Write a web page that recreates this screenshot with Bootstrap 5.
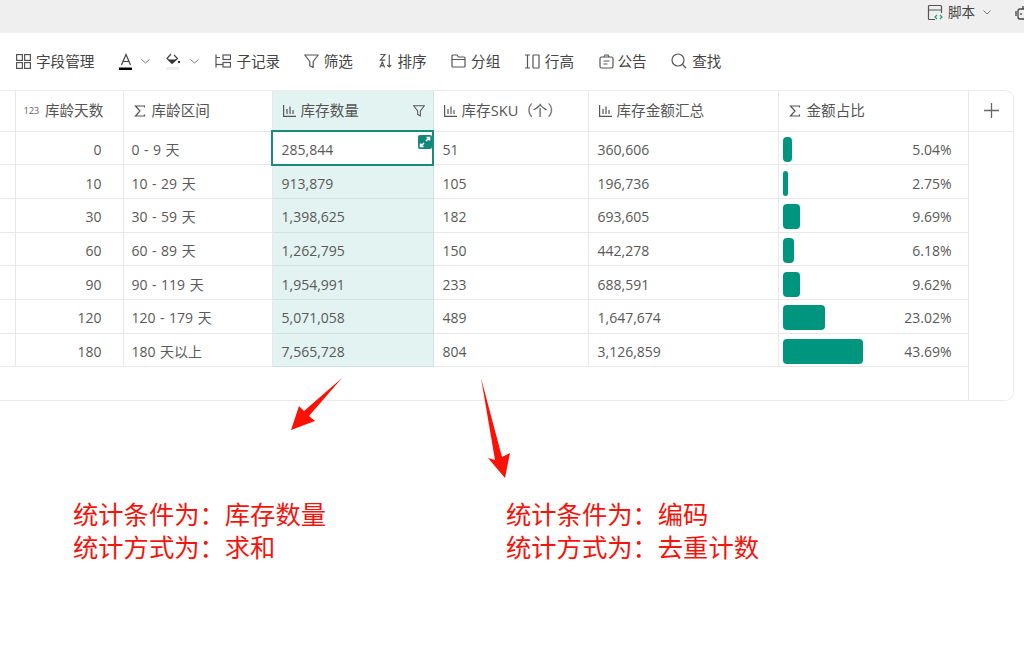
<!DOCTYPE html>
<html lang="zh-CN">
<head>
  <meta charset="UTF-8" />
  <meta name="viewport" content="width=device-width, initial-scale=1.0">
  <title>库龄统计</title>
  <link href="https://cdn.jsdelivr.net/npm/bootstrap@5.3.3/dist/css/bootstrap.min.css" rel="stylesheet" />
  <style>
    html, body { height: 100%; overflow: hidden; }
    body {
      position: relative;
      background: #fff;
      color: #555;
      font-family: "Open Sans", "Noto Sans CJK SC", sans-serif;
      font-size: 14px;
    }
    svg { display: block; flex: none; }
    .ic { fill: none; stroke: #555; stroke-width: 1.2; }
    .top-strip { height: 33px; padding-bottom: 8px; background: #efefef; font-size: 13.5px; color: #444; }
    .tool-strip { height: 57px; padding-left: 16px; gap: 24.5px; font-size: 14.6px; color: #444; }
    .tool-item { display: flex; align-items: center; gap: 5px; }
    .tool-tight { gap: 4px; }
    .tool-sub { margin-left: -8.5px; }
    .tool-back { margin-left: -1px; }
    .tool-back2 { margin-left: -2px; }
    .tool-fwd { margin-left: 2px; }
    .sheet-wrap {
      width: 1014px;
      height: 311px;
      border: 1px solid #ebebeb;
      border-left: 0;
      border-top-right-radius: 9px;
      border-bottom-right-radius: 9px;
      overflow: hidden;
    }
    .sheet { table-layout: fixed; width: 1013px; margin: 0; border-collapse: collapse; color: #595959; }
    .sheet > :not(caption) > * > * {
      padding: 3px 8px 0 9px;
      height: 33.7px;
      border: 0;
      border-bottom: 1px solid #e8e8e8;
      border-right: 1px solid #e8e8e8;
      box-shadow: none;
      background: transparent;
      color: #595959;
      vertical-align: middle;
    }
    .sheet > thead > tr > th { height: 40px; padding: 0 8px 0 10px; font-weight: 400; font-size: 14.6px; color: #555; }
    .sheet > thead > tr > th.age-head { padding-left: 8px; }
    .sheet > :not(caption) > * > .age-cell { padding-right: 21px; }
    .sheet > :not(caption) > * > .range-cell { padding-left: 8px; word-spacing: .9px; }
    .sheet > :not(caption) > * > .col-pick { background: #e3f3f1; border-bottom-color: #cfe2df; border-right-color: #cfe2df; border-left: 1px solid #cfe2df; }
    .sheet > :not(caption) > * > .cell-on {
      position: relative;
      background: #fff;
      outline: 2px solid #1b8b79;
      outline-offset: -1px;
    }
    .sheet > :not(caption) > * > .add-col { border-right: 0; border-bottom: 0; border-left: 1px solid #e8e8e8; }
    .sheet > thead > tr > th.add-head { border-right: 0; text-align: center; padding: 0 0 0 2px; }
    .sheet > tbody > tr > .foot-cell { height: 33px; border-right: 0; border-bottom: 0; }
    .head-in { display: flex; align-items: center; gap: 6px; white-space: nowrap; }
    .head-chart { gap: 5px; }
    .tag-123 { font-size: 9.5px; color: #666; letter-spacing: -.3px; }
    .grow-expand { position: absolute; top: 3px; right: 1px; width: 14px; height: 14px; background: #11897a; border-radius: 2px; }
    .pct-in { display: flex; align-items: center; justify-content: space-between; margin-left: -5px; margin-right: 8px; }
    .pct-bar { display: block; height: 25px; background: #00957f; border-radius: 4px; }
    .note-row { margin-top: 96px; padding-left: 73px; color: #f5140c; font-size: 25.3px; line-height: 33px; font-family: "Noto Sans CJK SC", sans-serif; }
    .note-one { width: 433px; }
    .arrows { position: absolute; left: 0; top: 0; pointer-events: none; }
  </style>
</head>
<body>
  <div class="top-strip d-flex justify-content-end align-items-center">
    <div class="d-flex align-items-center">
      <svg width="17" height="17" viewBox="0 0 17 17" class="ic"><path d="M8 15.500H2.500a1 1 0 0 1-1-1V2.500a1 1 0 0 1 1-1h11a1 1 0 0 1 1 1V9M1.500 6h13"/><path d="M10 11l-2 2 2 2M13 11l2 2-2 2" stroke="#2a9d6f"/></svg>
      <span class="ms-1">脚本</span>
      <svg class="ms-2" width="8" height="5" viewBox="0 0 8 5" fill="none" stroke="#777"><path d="M.5.500 4 4 7.500.5"/></svg>
      <svg class="ms-4" width="16" height="16" viewBox="0 0 16 16" style="margin-right:-7px" fill="none" stroke="#444" stroke-width="1.3"><path d="M1 6v5M8 1v3"/><rect x="3" y="4" width="12" height="10" rx="2"/><path d="M6 8v2M11 8v2"/></svg>
    </div>
  </div>

  <div class="tool-strip d-flex align-items-center">
    <div class="tool-item">
      <svg width="15" height="15" viewBox="0 0 15 15" class="ic"><rect x=".6" y=".6" width="5.800" height="5.800"/><rect x="8.600" y=".6" width="5.800" height="5.800"/><rect x=".6" y="8.600" width="5.800" height="5.800"/><rect x="8.600" y="8.600" width="5.800" height="5.800"/></svg>
      <span>字段管理</span>
    </div>
    <div class="d-flex align-items-center">
      <svg width="14" height="18" viewBox="0 0 14 18"><path d="M2.500 12 7 1.500 11.500 12M4 8.500h6" fill="none" stroke="#444" stroke-width="1.200"/><rect x="0" y="14.500" width="13" height="2.500" fill="#000"/></svg>
      <svg style="margin-left:8.500px" width="9" height="5" viewBox="0 0 9 5" fill="none" stroke="#777"><path d="M.5.500 4.500 4 8.500.5"/></svg>
      <svg style="margin-left:16px" width="15" height="18" viewBox="0 0 15 18"><path d="M5 1 1 5.500 6 10.500 11.500 5.500 8 2" fill="none" stroke="#444" stroke-width="1.200"/><path d="M2 6.500h9L6 10.500z" fill="#333"/><circle cx="13" cy="9" r="1.200" fill="#333"/><rect x="0" y="14" width="13" height="3" fill="#eee"/></svg>
      <svg style="margin-left:9px" width="9" height="5" viewBox="0 0 9 5" fill="none" stroke="#777"><path d="M.5.500 4.500 4 8.500.5"/></svg>
    </div>
    <div class="tool-item tool-sub">
      <svg width="16" height="14" viewBox="0 0 16 14" class="ic"><path d="M1 .5v13M1 3.500h4"/><rect x="8" y="1" width="7.500" height="4.500"/><rect x="8" y="8.500" width="7.500" height="4.500"/><path d="M1 10.500h7"/></svg>
      <span>子记录</span>
    </div>
    <div class="tool-item tool-back">
      <svg width="15" height="15" viewBox="0 0 15 15" class="ic"><path d="M.8 1h13.400L9.200 7.500v6l-3.400-1.800V7.500z" stroke-linejoin="round"/></svg>
      <span>筛选</span>
    </div>
    <div class="tool-item tool-tight tool-fwd">
      <svg width="14" height="16" viewBox="0 0 15 16" class="ic"><path d="M1.500 1h5L1.500 7h5M1 15l2.500-6L6 15M1.800 13h3.400M11 1v13.500M8.800 12.300l2.200 2.200 2.200-2.200"/></svg>
      <span>排序</span>
    </div>
    <div class="tool-item">
      <svg width="15" height="14" viewBox="0 0 15 14" class="ic"><path d="M1 12V2a1 1 0 0 1 1-1h4l1.500 2H13a1 1 0 0 1 1 1v8a1 1 0 0 1-1 1H2a1 1 0 0 1-1-1zM1 5.500h13"/></svg>
      <span>分组</span>
    </div>
    <div class="tool-item tool-back">
      <svg width="16" height="15" viewBox="0 0 16 15" class="ic"><path d="M1 1h5M1 14h5M3.500 1v13"/><rect x="9" y="1" width="6" height="13" rx=".5"/></svg>
      <span>行高</span>
    </div>
    <div class="tool-item tool-tight">
      <svg width="15" height="15" viewBox="0 0 15 15" class="ic"><rect x="1" y="3" width="13" height="11" rx="1.500"/><path d="M5 3 6 1h3l1 2M4.500 7h6M4.500 10h4"/></svg>
      <span>公告</span>
    </div>
    <div class="tool-item">
      <svg width="16" height="16" viewBox="0 0 16 16" class="ic"><circle cx="7" cy="7" r="6"/><path d="M11.500 11.500 15 15"/></svg>
      <span>查找</span>
    </div>
  </div>

  <div class="sheet-wrap">
    <table class="table sheet">
      <colgroup>
        <col style="width:15px"><col style="width:108px"><col style="width:149px"><col style="width:161px"><col style="width:155px"><col style="width:190px"><col style="width:190px"><col style="width:45px">
      </colgroup>
      <thead>
        <tr>
          <th></th>
          <th class="age-head"><div class="head-in"><span class="tag-123">123</span>库龄天数</div></th>
          <th><div class="head-in"><svg width="12" height="12" viewBox="0 0 12 12" class="ic"><path d="M10.500 2.500V1h-9L6 6l-4.500 5h9V9.500"/></svg>库龄区间</div></th>
          <th class="col-pick"><div class="head-in head-chart"><svg width="13" height="12" viewBox="0 0 13 12" class="ic"><path d="M.6 0v11.400H13M4 4v5M7 1.500V9M10 5v4"/></svg>库存数量<svg class="ms-auto" width="12" height="12" viewBox="0 0 15 15"><path d="M.8 1h13.400L9.200 7.500v6l-3.400-1.800V7.500z" fill="none" stroke="#555" stroke-width="1.300"/></svg></div></th>
          <th><div class="head-in head-chart"><svg width="13" height="12" viewBox="0 0 13 12" class="ic"><path d="M.6 0v11.400H13M4 4v5M7 1.500V9M10 5v4"/></svg>库存SKU（个）</div></th>
          <th><div class="head-in head-chart"><svg width="13" height="12" viewBox="0 0 13 12" class="ic"><path d="M.6 0v11.400H13M4 4v5M7 1.500V9M10 5v4"/></svg>库存金额汇总</div></th>
          <th><div class="head-in"><svg width="12" height="12" viewBox="0 0 12 12" class="ic"><path d="M10.500 2.500V1h-9L6 6l-4.500 5h9V9.500"/></svg>金额占比</div></th>
          <th class="add-head"><svg class="mx-auto" width="15" height="15" viewBox="0 0 15 15" fill="none" stroke="#666" stroke-width="1.300"><path d="M7.500 0v15M0 7.500h15"/></svg></th>
        </tr>
      </thead>
      <tbody>
        <tr>
          <td></td><td class="text-end age-cell">0</td><td class="range-cell">0 - 9 天</td>
          <td class="col-pick cell-on">285,844<span class="grow-expand"><svg width="14" height="14" viewBox="0 0 14 14" fill="none" stroke="#fff" stroke-width="1.600"><path d="M8 6l3.500-3.500M8.500 2.500h3v3M6 8l-3.500 3.500M5.500 11.500h-3v-3"/></svg></span></td>
          <td>51</td><td>360,606</td>
          <td><div class="pct-in"><span class="pct-bar" style="width:9px"></span>5.04%</div></td>
          <td class="add-col" rowspan="8"></td>
        </tr>
        <tr>
          <td></td><td class="text-end age-cell">10</td><td class="range-cell">10 - 29 天</td><td class="col-pick">913,879</td><td>105</td><td>196,736</td>
          <td><div class="pct-in"><span class="pct-bar" style="width:5px"></span>2.75%</div></td>
        </tr>
        <tr>
          <td></td><td class="text-end age-cell">30</td><td class="range-cell">30 - 59 天</td><td class="col-pick">1,398,625</td><td>182</td><td>693,605</td>
          <td><div class="pct-in"><span class="pct-bar" style="width:17.500px"></span>9.69%</div></td>
        </tr>
        <tr>
          <td></td><td class="text-end age-cell">60</td><td class="range-cell">60 - 89 天</td><td class="col-pick">1,262,795</td><td>150</td><td>442,278</td>
          <td><div class="pct-in"><span class="pct-bar" style="width:11px"></span>6.18%</div></td>
        </tr>
        <tr>
          <td></td><td class="text-end age-cell">90</td><td class="range-cell">90 - 119 天</td><td class="col-pick">1,954,991</td><td>233</td><td>688,591</td>
          <td><div class="pct-in"><span class="pct-bar" style="width:17.500px"></span>9.62%</div></td>
        </tr>
        <tr>
          <td></td><td class="text-end age-cell">120</td><td class="range-cell">120 - 179 天</td><td class="col-pick">5,071,058</td><td>489</td><td>1,647,674</td>
          <td><div class="pct-in"><span class="pct-bar" style="width:42px"></span>23.02%</div></td>
        </tr>
        <tr>
          <td></td><td class="text-end age-cell">180</td><td class="range-cell">180 天以上</td><td class="col-pick">7,565,728</td><td>804</td><td>3,126,859</td>
          <td><div class="pct-in"><span class="pct-bar" style="width:80px"></span>43.69%</div></td>
        </tr>
        <tr><td class="foot-cell" colspan="7"></td></tr>
      </tbody>
    </table>
  </div>

  <div class="note-row d-flex">
    <div class="note-one">统计条件为：库存数量<br>统计方式为：求和</div>
    <div>统计条件为：编码<br>统计方式为：去重计数</div>
  </div>

  <svg class="arrows" width="1024" height="661" viewBox="0 0 1024 661">
    <polygon fill="#fb1207" points="342,378 309,416 315,421 291,430 299,406 304,411"/>
    <polygon fill="#fb1207" points="481,378 502,457 510,453 505,478 488,458 495,460"/>
  </svg>
</body>
</html>
